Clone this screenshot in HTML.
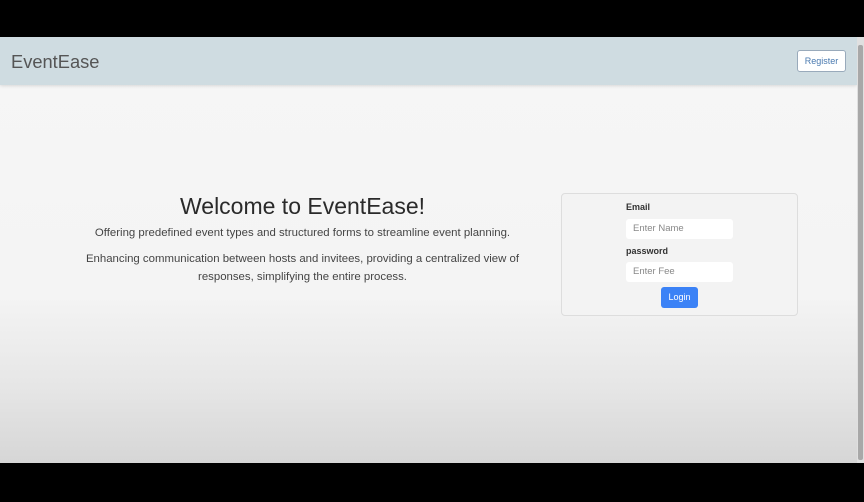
<!DOCTYPE html>
<html><head><style>
*{margin:0;padding:0;box-sizing:border-box}
body{width:864px;height:502px;background:#000;font-family:"Liberation Sans",sans-serif;position:relative;overflow:hidden}
.page{position:absolute;left:0;top:37px;width:857px;height:426px;background:linear-gradient(#f6f6f6 0,#f4f4f4 260px,#e6e6e6 350px,#d6d6d6 426px)}
.sb{position:absolute;left:857px;top:37px;width:7px;height:426px;background:#e0e0e0}
.sb div{position:absolute;left:1px;top:8px;width:5px;height:415px;background:#a8a8a8;border-radius:2px}
.hdr{position:absolute;left:0;top:0;width:857px;height:48px;background:#cfdce1;box-shadow:0 1px 3px rgba(0,0,0,.12)}
.brand{position:absolute;left:11px;top:14px;font-size:18.3px;color:#555}
.reg{position:absolute;left:797px;top:13px;width:49px;height:22px;background:#fff;border:1px solid #9ab;border-radius:3px;font-size:9px;color:#4a7ab0;text-align:center;line-height:20px}
h1{position:absolute;left:100px;width:405px;top:156px;text-align:center;font-weight:normal;font-size:23px;color:#2a2a2a}
p{position:absolute;left:75px;width:455px;text-align:center;font-size:11.4px;color:#444;line-height:18px}
.card{position:absolute;left:561px;top:156px;width:237px;height:123px;border:1px solid #ddd;border-radius:4px;background:#f3f3f3}
.lbl{position:absolute;left:64px;font-size:9px;font-weight:bold;color:#333}
.inp{position:absolute;left:64px;width:107px;height:20px;background:#fff;border-radius:3px;font-size:9.5px;color:#888;padding-left:7px;line-height:20px}
.btn{position:absolute;left:99px;top:93px;width:37px;height:21px;background:#3b82f6;border-radius:3px;color:#fff;font-size:9px;text-align:center;line-height:21px}
</style></head><body>
<div class="page">
<div class="hdr"><div class="brand">EventEase</div><div class="reg">Register</div></div>
<h1>Welcome to EventEase!</h1>
<p style="top:187px">Offering predefined event types and structured forms to streamline event planning.</p>
<p style="top:213px">Enhancing communication between hosts and invitees, providing a centralized view of responses, simplifying the entire process.</p>
<div class="card">
<div class="lbl" style="top:8px">Email</div>
<div class="inp" style="top:25px">Enter Name</div>
<div class="lbl" style="top:52px">password</div>
<div class="inp" style="top:68px">Enter Fee</div>
<div class="btn">Login</div>
</div>
</div>
<div class="sb"><div></div></div>
</body></html>
